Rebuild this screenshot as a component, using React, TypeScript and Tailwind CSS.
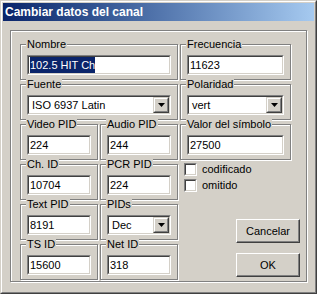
import React from "react";

type GroupProps = {
  label: string;
  className?: string;
  children?: React.ReactNode;
};

function Group({ label, className = "", children }: GroupProps) {
  return (
    <div
      className={`relative border border-[#808080] px-[6px] pt-[10px] shadow-[1px_1px_0_#fff,inset_1px_1px_0_#fff] ${className}`}
    >
      <span className="absolute left-[5px] top-[-8px] bg-[#d4d0c8] px-[1px] leading-[14px]">
        {label}
      </span>
      {children}
    </div>
  );
}

function Sunken({ className = "", children }: { className?: string; children?: React.ReactNode }) {
  return (
    <div
      className={`border border-b-white border-l-[#808080] border-r-white border-t-[#808080] ${className}`}
    >
      <div className="flex h-full items-center border border-b-[#d4d0c8] border-l-[#404040] border-r-[#d4d0c8] border-t-[#404040] bg-white">
        {children}
      </div>
    </div>
  );
}

function TextBox({ value, selected }: { value: string; selected?: boolean }) {
  return (
    <Sunken className="h-[20px]">
      <span
        className={`ml-[1px] leading-[16px] ${selected ? "bg-[#0a246a] text-white" : ""}`}
      >
        {value}
      </span>
    </Sunken>
  );
}

function Combo({ value }: { value: string }) {
  return (
    <Sunken className="h-[20px]">
      <span className="flex-1 pl-[3px]">{value}</span>
      <div className="h-full w-[16px] border border-b-[#404040] border-l-[#d4d0c8] border-r-[#404040] border-t-[#d4d0c8]">
        <div className="flex h-full items-center justify-center border border-b-[#808080] border-l-white border-r-[#808080] border-t-white bg-[#d4d0c8]">
          <svg width="7" height="4" viewBox="0 0 7 4">
            <path d="M0 0h7L3.5 4z" fill="#000" />
          </svg>
        </div>
      </div>
    </Sunken>
  );
}

function Check({ label }: { label: string }) {
  return (
    <div className="flex h-[13px] items-center gap-[5px]">
      <Sunken className="h-[13px] w-[13px]" />
      <span>{label}</span>
    </div>
  );
}

function Button({ children }: { children: React.ReactNode }) {
  return (
    <button className="h-[24px] w-[64px] border border-b-[#404040] border-l-white border-r-[#404040] border-t-white bg-[#d4d0c8] shadow-[inset_-1px_-1px_0_#808080]">
      {children}
    </button>
  );
}

export default function App() {
  return (
    <div className="h-[294px] w-[317px] bg-[#d4d0c8] font-['Liberation_Sans',Arial,sans-serif] text-[11px] text-black">
      <div className="flex h-full flex-col border border-b-[#404040] border-l-[#d4d0c8] border-r-[#404040] border-t-[#d4d0c8]">
        <div className="flex flex-1 flex-col border border-b-[#808080] border-l-white border-r-[#808080] border-t-white p-[1px]">
          <div className="flex h-[18px] items-center bg-linear-to-r from-[#0a246a] to-[#a6caf0] pl-[2px] text-[12px] font-bold text-white">
            Cambiar datos del canal
          </div>
          <div className="flex flex-1 flex-col px-[7px] pb-[9px] pt-[9px]">
            <div className="flex-1 border border-[#808080] pl-[9px] pt-[13px] shadow-[1px_1px_0_#fff,inset_1px_1px_0_#fff]">
              <div className="grid grid-cols-[78px_78px_111px] grid-rows-[36px_36px_36px_36px_36px_36px] gap-x-[2px] gap-y-[4px]">
                <Group label="Nombre" className="col-span-2">
                  <TextBox value="102.5 HIT Ch" selected />
                </Group>
                <Group label="Frecuencia">
                  <TextBox value="11623" />
                </Group>

                <Group label="Fuente" className="col-span-2">
                  <Combo value="ISO 6937 Latin" />
                </Group>
                <Group label="Polaridad">
                  <Combo value="vert" />
                </Group>

                <Group label="Video PID">
                  <TextBox value="224" />
                </Group>
                <Group label="Audio PID">
                  <TextBox value="244" />
                </Group>
                <Group label="Valor del símbolo">
                  <TextBox value="27500" />
                </Group>

                <Group label="Ch. ID">
                  <TextBox value="10704" />
                </Group>
                <Group label="PCR PID">
                  <TextBox value="224" />
                </Group>
                <div className="col-start-3 row-span-3 row-start-4 flex flex-col">
                  <div className="-mt-[1px] ml-[4px] flex flex-col gap-[3px]">
                    <Check label="codificado" />
                    <Check label="omitido" />
                  </div>
                  <div className="-mr-[9px] mb-[3px] mt-auto flex flex-col items-end gap-[10px]">
                    <Button>Cancelar</Button>
                    <Button>OK</Button>
                  </div>
                </div>

                <Group label="Text PID" className="col-start-1 row-start-5">
                  <TextBox value="8191" />
                </Group>
                <Group label="PIDs" className="col-start-2 row-start-5">
                  <Combo value="Dec" />
                </Group>

                <Group label="TS ID" className="col-start-1 row-start-6">
                  <TextBox value="15600" />
                </Group>
                <Group label="Net ID" className="col-start-2 row-start-6">
                  <TextBox value="318" />
                </Group>
              </div>
            </div>
          </div>
        </div>
      </div>
    </div>
  );
}
